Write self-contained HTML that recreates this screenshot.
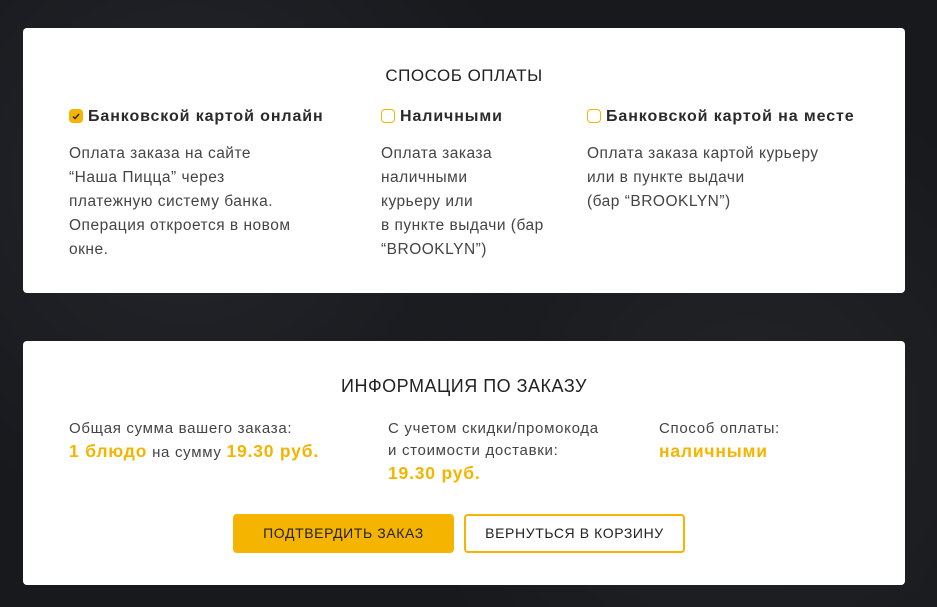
<!DOCTYPE html><html><head><meta charset="utf-8"><style>
body{margin:0;width:937px;height:607px;background:#17191d;background-image:radial-gradient(circle at 20% 30%,#24262b 0,transparent 40%),radial-gradient(circle at 80% 70%,#222428 0,transparent 40%);font-family:"Liberation Sans",sans-serif;color:#333;position:relative;overflow:hidden}
.card{position:absolute;left:23px;width:882px;background:#fff;border-radius:4px}
.t{position:absolute;left:0;width:100%;text-align:center;font-size:17px;letter-spacing:0.5px;color:#222}
.a{position:absolute;white-space:nowrap}
.opt{font-size:16px;font-weight:bold;letter-spacing:0.9px;color:#2a2a2a}
.cb{display:inline-block;width:12px;height:12px;border:1.5px solid #f5b400;border-radius:4px;vertical-align:-2px;margin-right:5px;position:relative}
.cb.on{background:#f5b400}
.d{font-size:15.5px;line-height:24px;letter-spacing:0.5px;color:#444}
.s{font-size:15px;letter-spacing:0.7px;color:#444;line-height:22px}
.y{color:#f5b400;font-weight:bold;font-size:17.5px;letter-spacing:0.8px}
.btn{position:absolute;top:173px;height:39px;border-radius:4px;font-size:14px;letter-spacing:0.6px;text-align:center;line-height:39px;color:#222;box-sizing:border-box}
</style></head><body>
<div class="card" style="top:28px;height:265px">
<div class="t" style="top:38px">СПОСОБ ОПЛАТЫ</div>
<div class="a opt" style="left:46px;top:80px"><span class="cb on"><svg width="12" height="12" style="position:absolute;left:0;top:0"><path d="M3 6.5l2 2 4-4.5" stroke="#222" stroke-width="1.4" fill="none"/></svg></span>Банковской картой онлайн</div>
<div class="a opt" style="left:358px;top:80px"><span class="cb"></span>Наличными</div>
<div class="a opt" style="left:564px;top:80px"><span class="cb"></span>Банковской картой на месте</div>
<div class="a d" style="left:46px;top:114px">Оплата заказа на сайте<br>“Наша Пицца” через<br>платежную систему банка.<br>Операция откроется в новом<br>окне.</div>
<div class="a d" style="left:358px;top:114px">Оплата заказа<br>наличными<br>курьеру или<br>в пункте выдачи (бар<br>“BROOKLYN”)</div>
<div class="a d" style="left:564px;top:114px">Оплата заказа картой курьеру<br>или в пункте выдачи<br>(бар “BROOKLYN”)</div>
</div>
<div class="card" style="top:341px;height:244px">
<div class="t" style="top:35px;font-size:18px">ИНФОРМАЦИЯ ПО ЗАКАЗУ</div>
<div class="a s" style="left:46px;top:77px">Общая сумма вашего заказа:<br><span class="y">1 блюдо</span> на сумму <span class="y">19.30 руб.</span></div>
<div class="a s" style="left:365px;top:77px">С учетом скидки/промокода<br>и стоимости доставки:<br><span class="y">19.30 руб.</span></div>
<div class="a s" style="left:636px;top:77px">Способ оплаты:<br><span class="y">наличными</span></div>
<div class="btn" style="left:210px;width:221px;background:#f5b400">ПОДТВЕРДИТЬ ЗАКАЗ</div>
<div class="btn" style="left:441px;width:221px;border:2px solid #f5b400;line-height:35px">ВЕРНУТЬСЯ В КОРЗИНУ</div>
</div>
</body></html>
